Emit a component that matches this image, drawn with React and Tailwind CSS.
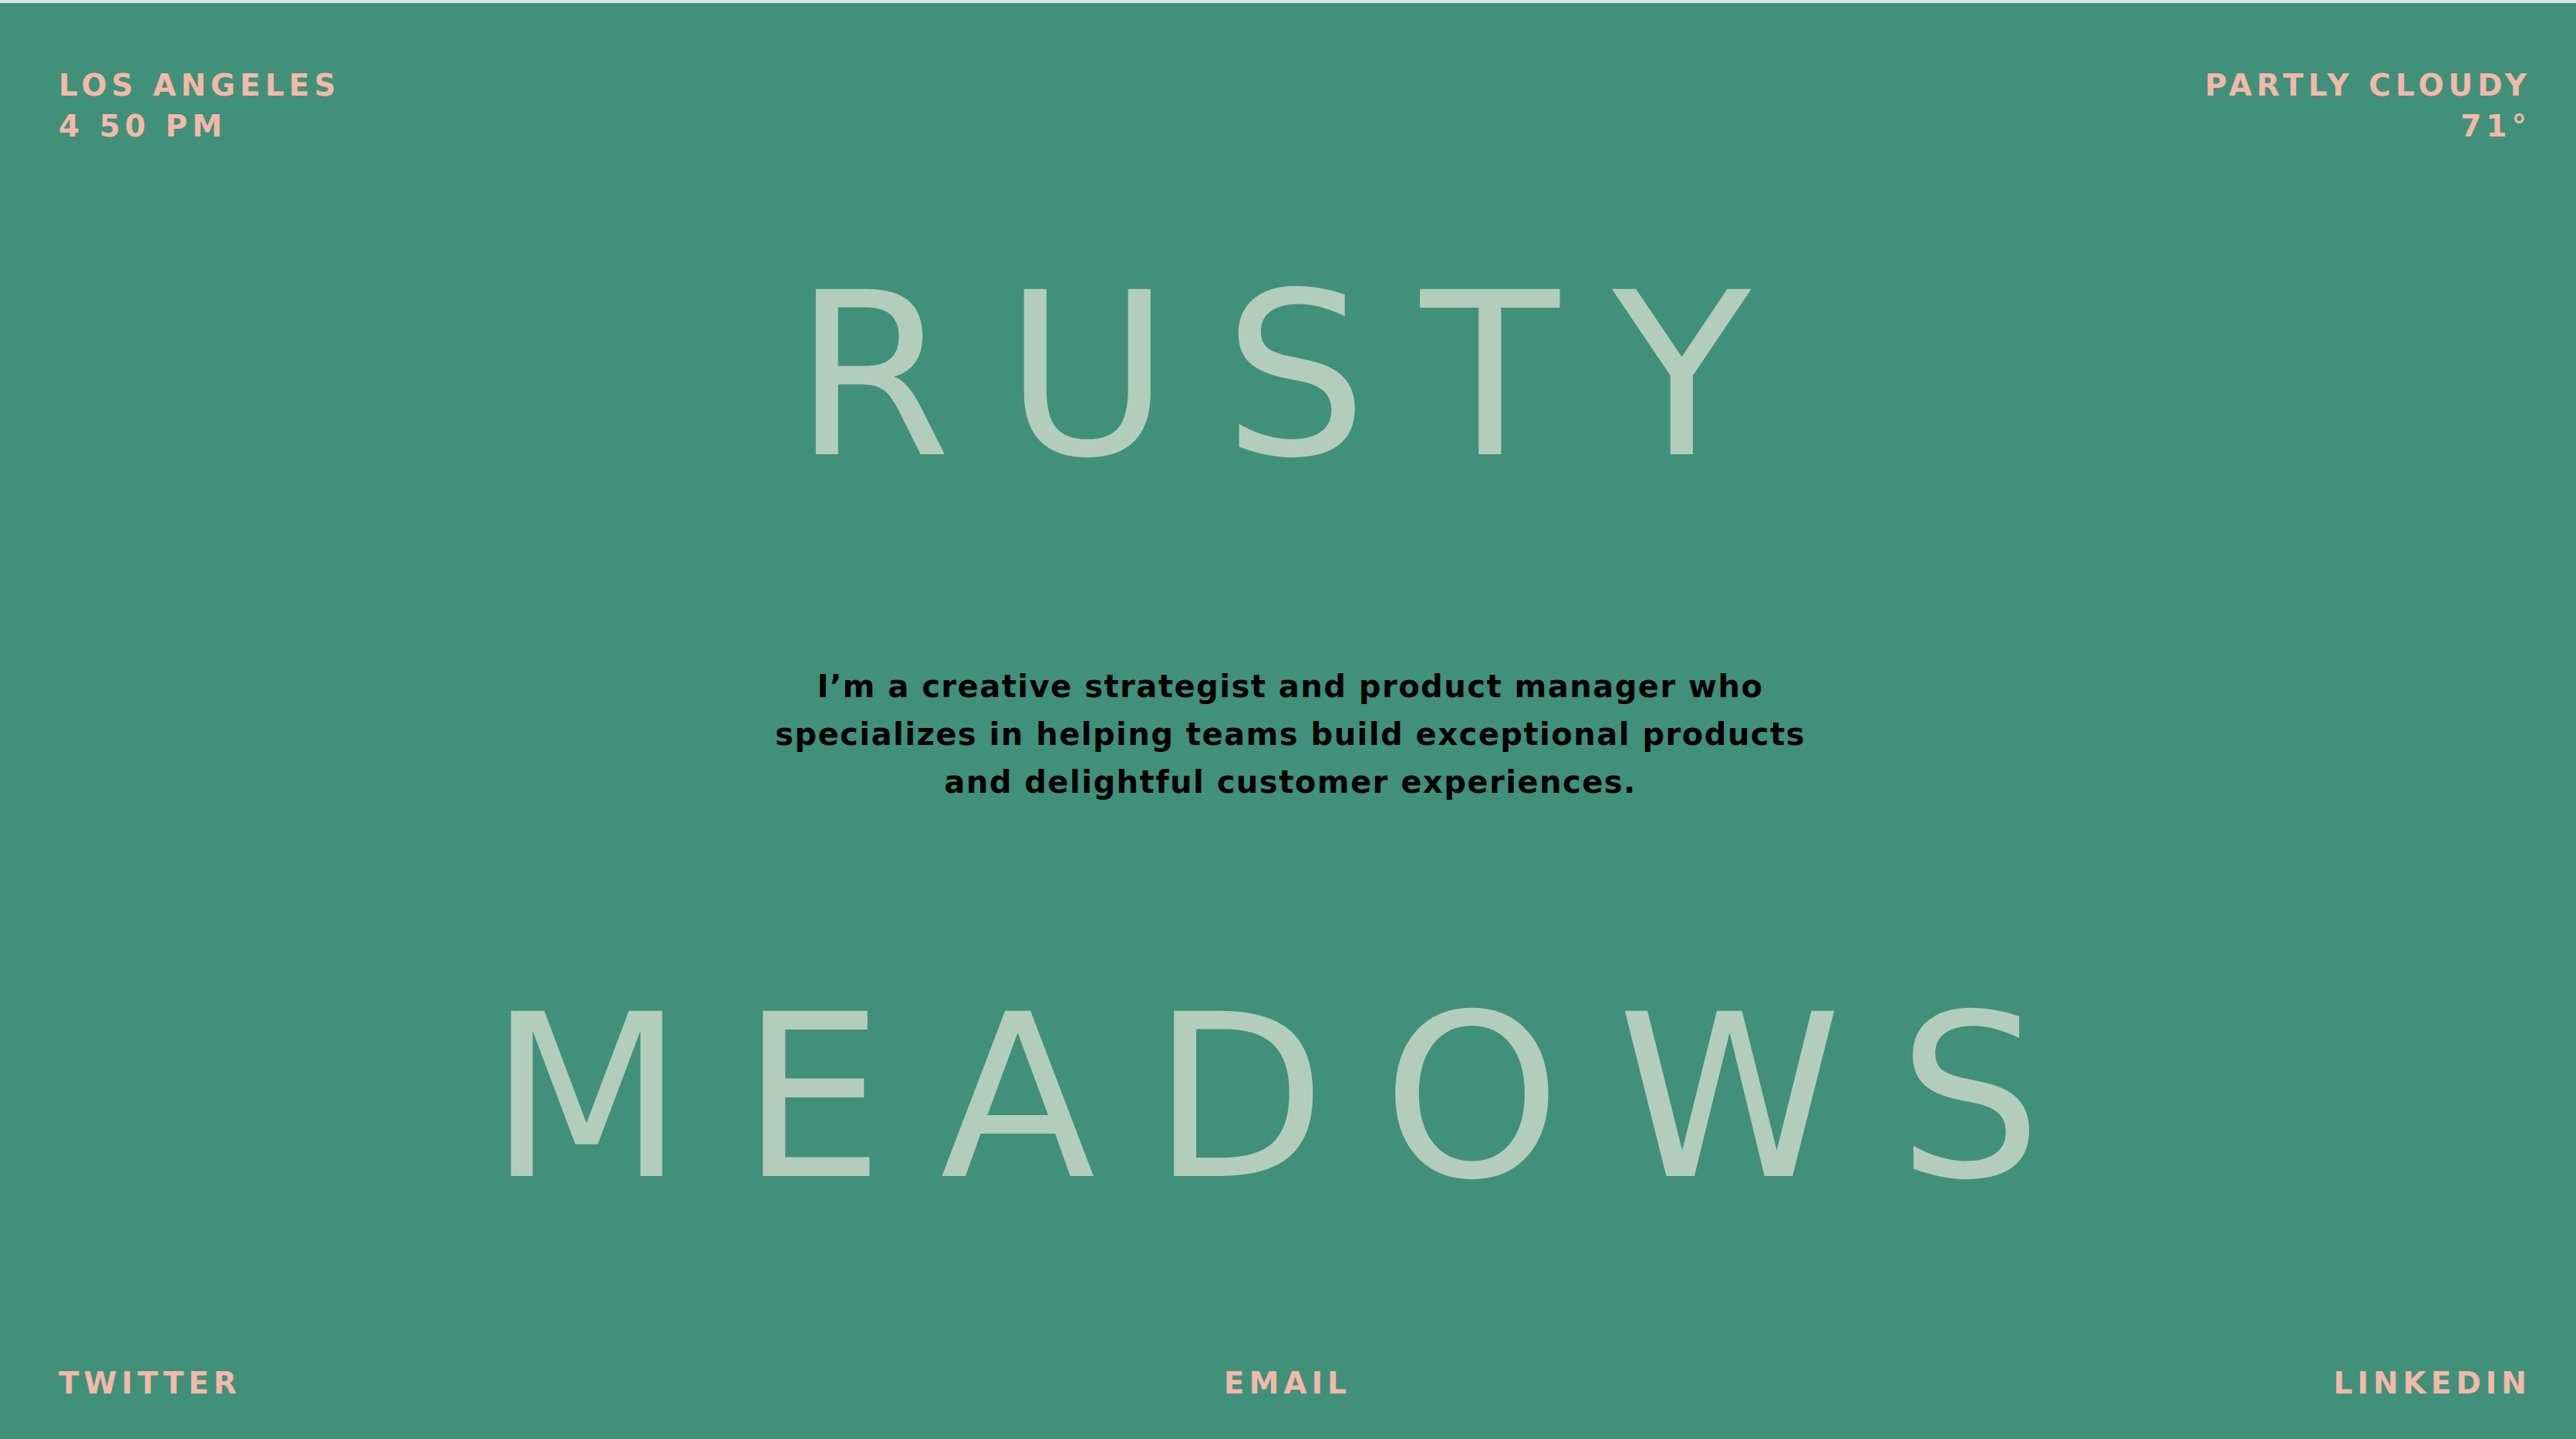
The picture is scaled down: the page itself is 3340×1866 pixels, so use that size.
export default function App() {
  return (
    <div
      className="h-screen flex flex-col bg-[#41907a] border-t-4 border-[#dadfde] overflow-hidden"
      style={{ fontFamily: '"DejaVu Sans", "Liberation Sans", sans-serif' }}
    >
      {/* HEADER */}
      <header className="flex justify-between pt-[80px] pl-[76px] pr-[58px] text-[39px] leading-[53px] tracking-[6px] font-semibold text-[#f2b9a8]">
        <div>
          <div>LOS ANGELES</div>
          <div>4 50 PM</div>
        </div>
        <div className="text-right">
          <div>PARTLY CLOUDY</div>
          <div>71°</div>
        </div>
      </header>

      {/* MAIN */}
      <main className="flex-1 flex flex-col items-center">
        <h1 className="mt-[150px] pl-[28px] text-[294px] leading-[294px] tracking-[69px] font-normal text-[#b3cdbd]">
          RUSTY
        </h1>

        <p className="mt-[225px] pl-[6px] max-w-[1400px] text-center text-[40px] leading-[62px] tracking-[1.5px] font-bold text-black">
          I’m a creative strategist and product manager who specializes in
          helping teams build exceptional products and delightful customer
          experiences.
        </p>

        <h2 className="mt-[231px] pl-[14px] text-[294px] leading-[294px] tracking-[73px] font-normal text-[#b3cdbd]">
          MEADOWS
        </h2>
      </main>

      {/* FOOTER */}
      <footer className="flex justify-between pb-[46px] pl-[76px] pr-[58px] text-[39px] leading-[53px] tracking-[6px] font-semibold text-[#f2b9a8]">
        <a href="#">TWITTER</a>
        <a href="#">EMAIL</a>
        <a href="#">LINKEDIN</a>
      </footer>
    </div>
  );
}
